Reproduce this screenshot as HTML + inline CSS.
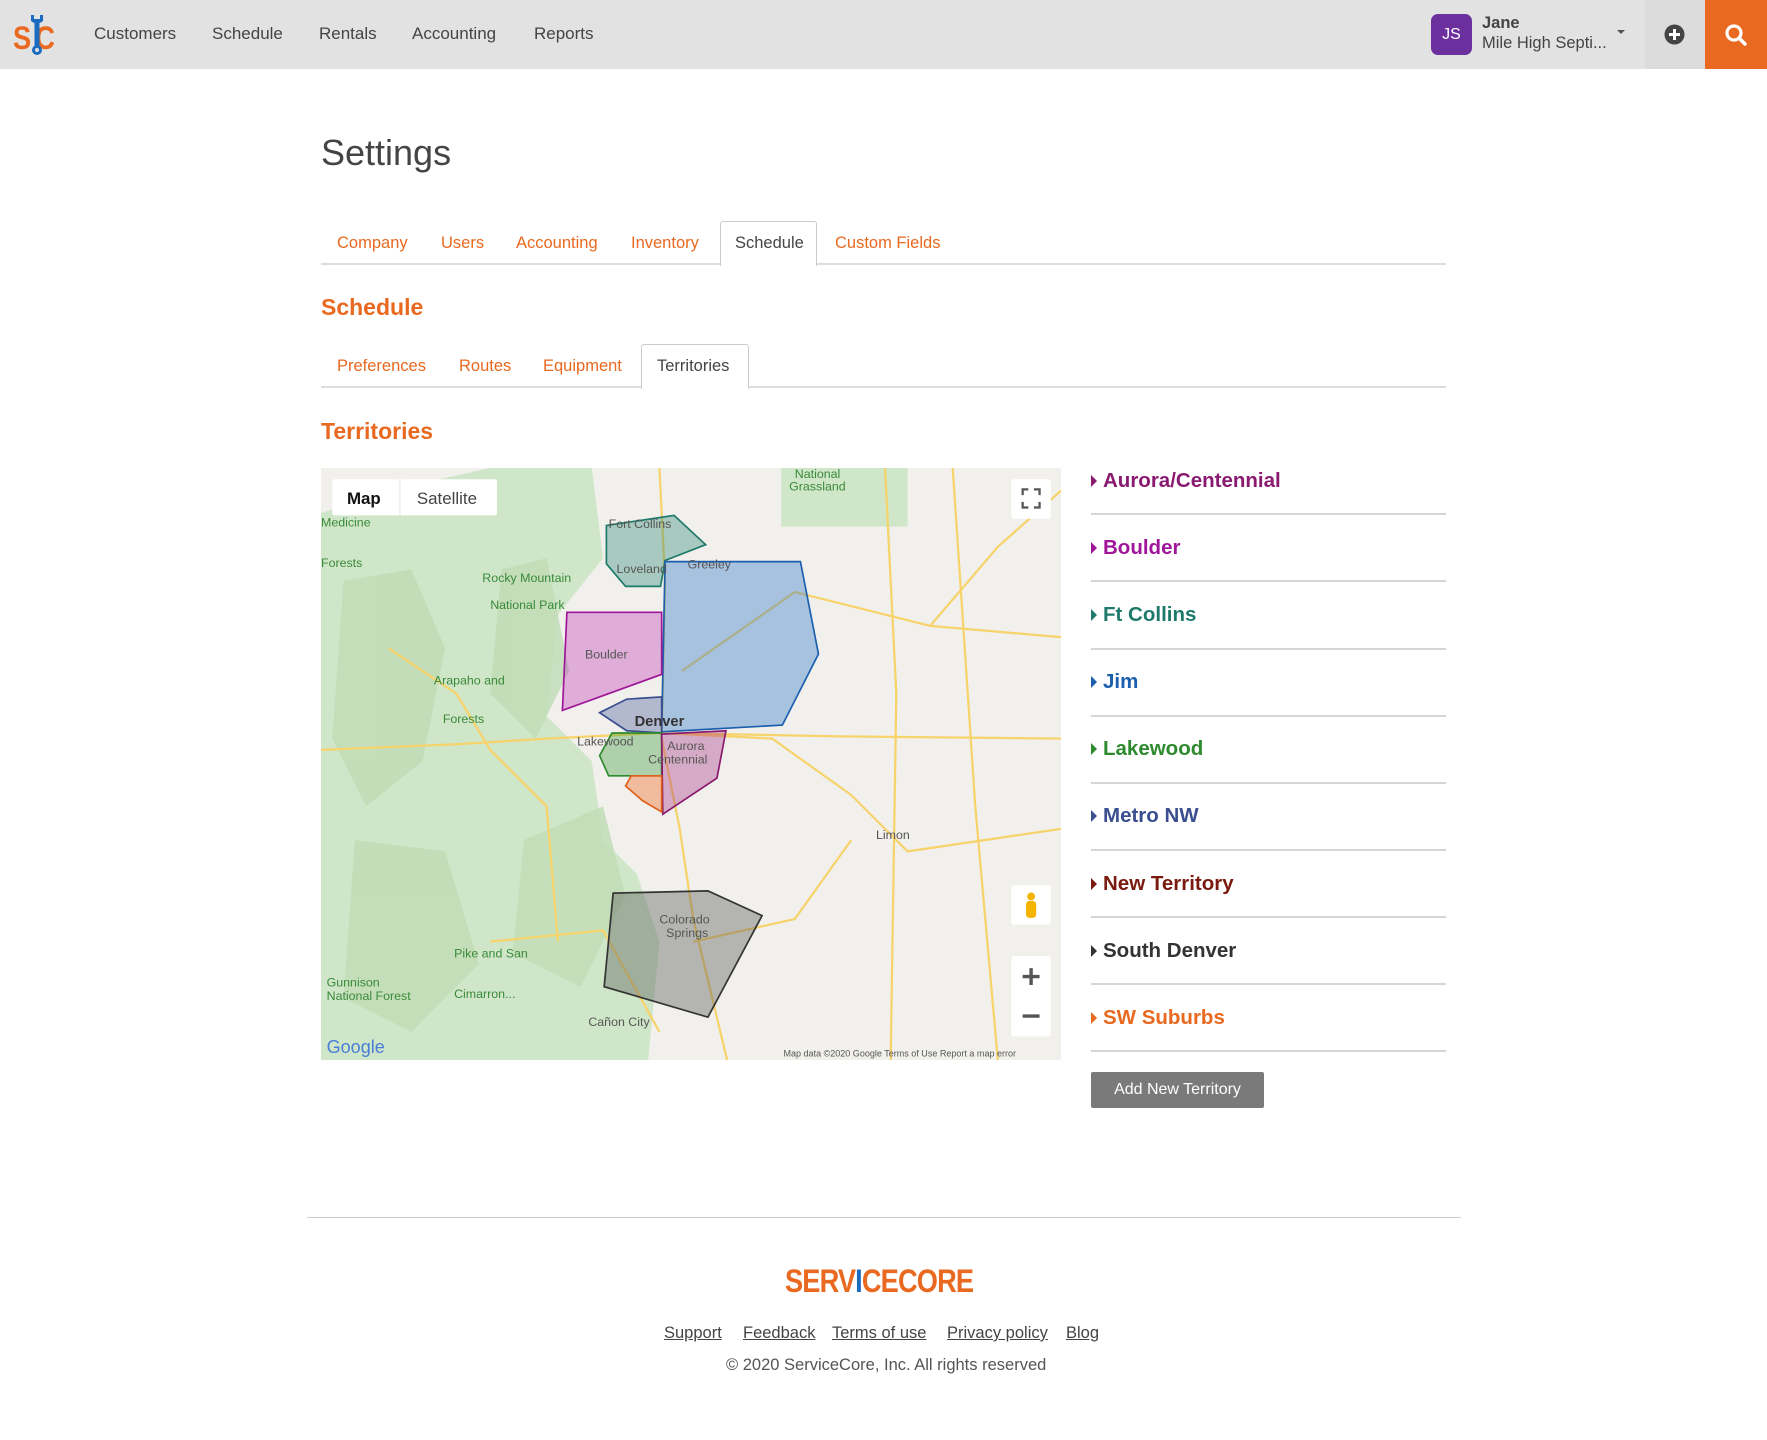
<!DOCTYPE html>
<html><head><meta charset="utf-8"><style>
*{margin:0;padding:0;box-sizing:border-box}
body{width:1767px;height:1440px;background:#fff;font-family:"Liberation Sans",sans-serif;position:relative;overflow:hidden;color:#444}
.a{position:absolute;white-space:nowrap}
.hdr{position:absolute;left:0;top:0;width:1767px;height:69px;background:#e2e2e2}
.nav{font-size:17px;color:#444;top:24px}
.tab{font-size:16.5px;color:#e8691f}
.tabbox{position:absolute;border:1px solid #ccc;border-bottom:none;background:#fff;border-radius:3px 3px 0 0}
.line{position:absolute;height:2px;background:#ddd}
.item{font-size:20.5px;font-weight:bold;left:1103px}
.tri{position:absolute;left:1091px;width:0;height:0;border-top:6px solid transparent;border-bottom:6px solid transparent;border-left:6px solid}
.sep{position:absolute;left:1091px;width:355px;height:2px;background:#d6d6d6}
.ft{font-size:16.5px;color:#444;text-decoration:underline;top:1324px}
</style></head><body>
<div class="hdr"></div>
<!-- logo -->
<div class="a" style="left:13px;top:20px;font-size:32px;font-weight:bold;color:#e8691f;letter-spacing:-2px;transform:scaleX(.85);transform-origin:left">S<span style="color:#e2e2e2">I</span>C</div>
<svg class="a" style="left:28px;top:13px" width="18" height="44" viewBox="0 0 18 44"><path d="M3 2 L3 8 Q9 13 15 8 L15 2 L12 2 L12 6 L6 6 L6 2Z" fill="#1b6bbf"/><rect x="6.5" y="9" width="5" height="26" fill="#1b6bbf"/><circle cx="9" cy="37" r="5" fill="#1b6bbf"/><circle cx="9" cy="37" r="2" fill="#e2e2e2"/></svg>
<div class="a nav" style="left:94px">Customers</div>
<div class="a nav" style="left:212px">Schedule</div>
<div class="a nav" style="left:319px">Rentals</div>
<div class="a nav" style="left:412px">Accounting</div>
<div class="a nav" style="left:534px">Reports</div>
<div class="a" style="left:1431px;top:14px;width:41px;height:41px;border-radius:7px;background:#6c2f9e;color:#fff;font-size:16px;text-align:center;line-height:41px">JS</div>
<div class="a" style="left:1482px;top:14px;font-size:16.5px;font-weight:bold;color:#444">Jane</div>
<div class="a" style="left:1482px;top:34px;font-size:16.5px;color:#444">Mile High Septi...</div>
<div class="a" style="left:1617px;top:30px;border-left:4px solid transparent;border-right:4px solid transparent;border-top:4px solid #555"></div>
<div class="a" style="left:1645px;top:0;width:60px;height:69px;background:#dcdcdc"></div>
<svg class="a" style="left:1664px;top:24px" width="21" height="21" viewBox="0 0 21 21"><circle cx="10.5" cy="10.5" r="10" fill="#444"/><path d="M10.5 5v11M5 10.5h11" stroke="#fff" stroke-width="3"/></svg>
<div class="a" style="left:1705px;top:0;width:62px;height:69px;background:#e8691f"></div>
<svg class="a" style="left:1724px;top:23px" width="24" height="24" viewBox="0 0 24 24"><circle cx="10" cy="10" r="7" fill="none" stroke="#fff" stroke-width="3.2"/><path d="M15 15l6 6" stroke="#fff" stroke-width="3.6" stroke-linecap="round"/></svg>

<div class="a" style="left:321px;top:132px;font-size:36px;color:#444">Settings</div>

<div class="tabbox" style="left:720px;top:221px;width:97px;height:45px"></div>
<div class="line" style="left:321px;top:263px;width:399px"></div>
<div class="line" style="left:817px;top:263px;width:629px"></div>
<div class="a tab" style="left:337px;top:234px">Company</div>
<div class="a tab" style="left:441px;top:234px">Users</div>
<div class="a tab" style="left:516px;top:234px">Accounting</div>
<div class="a tab" style="left:631px;top:234px">Inventory</div>
<div class="a tab" style="left:735px;top:234px;color:#444">Schedule</div>
<div class="a tab" style="left:835px;top:234px">Custom Fields</div>

<div class="a" style="left:321px;top:294px;font-size:23px;font-weight:bold;color:#e8691f">Schedule</div>

<div class="tabbox" style="left:641px;top:344px;width:108px;height:45px"></div>
<div class="line" style="left:321px;top:386px;width:320px"></div>
<div class="line" style="left:749px;top:386px;width:697px"></div>
<div class="a tab" style="left:337px;top:357px">Preferences</div>
<div class="a tab" style="left:459px;top:357px">Routes</div>
<div class="a tab" style="left:543px;top:357px">Equipment</div>
<div class="a tab" style="left:657px;top:357px;color:#444">Territories</div>

<div class="a" style="left:321px;top:418px;font-size:23px;font-weight:bold;color:#e8691f">Territories</div>

<!-- map -->
<svg class="a" style="left:321px;top:468px" width="740" height="592" viewBox="0 0 656 525" preserveAspectRatio="none">
<rect width="656" height="525" fill="#f1f0ec"/>
<g fill="#cfe6c8">
<polygon points="0,40 60,20 150,0 240,0 250,80 210,130 200,220 240,260 250,330 280,360 300,420 290,525 0,525"/>
<rect x="408" y="0" width="112" height="52"/>
</g>
<g fill="#bfdcb5" opacity=".8">
<polygon points="20,100 80,90 110,160 90,260 40,300 10,240"/>
<polygon points="160,90 200,80 220,180 190,240 150,200"/>
<polygon points="30,330 110,340 140,440 80,500 20,470"/>
<polygon points="180,330 250,300 270,380 230,460 170,430"/>
</g>
<g fill="none" stroke="#f7d36b" stroke-width="2">
<path d="M300 0 L305 100 L302 240 L318 320 L330 400 L360 525"/>
<path d="M0 250 L120 245 L200 240 L300 235 L460 238 L656 240"/>
<path d="M300 235 L400 240 L470 290 L520 340 L656 320"/>
<path d="M320 180 L420 110 L540 140 L656 150"/>
<path d="M540 140 L600 70 L656 20"/>
<path d="M60 160 L120 200 L150 250 L200 300 L210 420"/>
<path d="M500 0 L510 200 L505 525"/>
<path d="M470 330 L420 400 L330 420"/>
<path d="M150 420 L250 410 L300 500"/>
<path d="M560 0 L580 300 L600 525"/>
</g>
<g stroke-width="1.5">
<polygon points="253,51 313,42 341,68 305,82 301,105 270,105 253,85" fill="rgba(30,130,110,.35)" stroke="#1e7a6a"/>
<polygon points="305,83 425,83 441,165 409,228 302,234" fill="rgba(30,110,200,.35)" stroke="#1b5fae"/>
<polygon points="218,128 302,128 302,183 214,215" fill="rgba(190,50,180,.35)" stroke="#a0169a"/>
<polygon points="247,217 271,205 302,203 302,235 271,233" fill="rgba(60,80,150,.35)" stroke="#3a4e90"/>
<polygon points="258,235 302,235 302,273 255,273 247,255" fill="rgba(50,150,50,.35)" stroke="#2e8a2e"/>
<polygon points="302,236 359,233 351,275 303,307" fill="rgba(160,40,130,.35)" stroke="#8a1a70"/>
<polygon points="275,273 302,273 302,305 285,295 270,282" fill="rgba(240,110,40,.4)" stroke="#e0601a"/>
<polygon points="259,377 343,375 391,397 343,487 251,460" fill="rgba(90,90,90,.4)" stroke="#333"/>
</g>
<g font-family="Liberation Sans" font-size="11" fill="#555">
<text x="234" y="169">Boulder</text><text x="278" y="229" font-weight="bold" font-size="13" fill="#333">Denver</text>
<text x="227" y="246">Lakewood</text><text x="307" y="250">Aurora</text><text x="290" y="262">Centennial</text>
<text x="300" y="404">Colorado</text><text x="306" y="416">Springs</text>
<text x="255" y="53">Fort Collins</text><text x="262" y="93">Loveland</text><text x="325" y="89">Greeley</text>
<text x="420" y="9" fill="#3a8a3a">National</text><text x="415" y="20" fill="#3a8a3a">Grassland</text>
<text x="143" y="101" fill="#3a8a3a">Rocky Mountain</text><text x="150" y="125" fill="#3a8a3a">National Park</text>
<text x="100" y="192" fill="#3a8a3a">Arapaho and</text><text x="108" y="226" fill="#3a8a3a">Forests</text>
<text x="0" y="52" fill="#3a8a3a">Medicine</text><text x="0" y="88" fill="#3a8a3a">Forests</text>
<text x="5" y="460" fill="#3a8a3a">Gunnison</text><text x="5" y="472" fill="#3a8a3a">National Forest</text>
<text x="118" y="434" fill="#3a8a3a">Pike and San</text><text x="118" y="470" fill="#3a8a3a">Cimarron...</text>
<text x="492" y="329">Limon</text><text x="237" y="495">Cañon City</text><text x="410" y="522" font-size="8">Map data ©2020 Google   Terms of Use   Report a map error</text>
<text x="5" y="519" font-size="16" fill="#4a7fd8">Google</text>
</g>
<rect x="10" y="10" width="146" height="32" fill="#fff" rx="2"/>
<line x1="70" y1="10" x2="70" y2="42" stroke="#e6e6e6"/>
<text x="23" y="32" font-family="Liberation Sans" font-size="15" font-weight="bold" fill="#111">Map</text>
<text x="85" y="32" font-family="Liberation Sans" font-size="15" fill="#444">Satellite</text>
<rect x="612" y="10" width="35" height="35" fill="#fff" rx="2"/>
<path d="M622 24v-5h5M632 19h5v5M637 30v5h-5M627 35h-5v-5" stroke="#555" stroke-width="2" fill="none"/>
<rect x="612" y="370" width="35" height="35" fill="#fff" rx="2"/>
<circle cx="629.5" cy="380" r="3.5" fill="#f4b400"/><rect x="625" y="384" width="9" height="15" rx="3" fill="#f4b400"/>
<rect x="612" y="433" width="35" height="71" fill="#fff" rx="2"/>
<path d="M622 451h15M629.5 443.5v15M622 486h15" stroke="#555" stroke-width="3"/>
</svg>

<!-- list -->
<div class="tri" style="top:475px;border-left-color:#8a1a70"></div><div class="a item" style="top:469px;color:#8a1a70">Aurora/Centennial</div>
<div class="sep" style="top:513px"></div>
<div class="tri" style="top:542px;border-left-color:#a0169a"></div><div class="a item" style="top:536px;color:#a0169a">Boulder</div>
<div class="sep" style="top:580px"></div>
<div class="tri" style="top:609px;border-left-color:#1e7a6a"></div><div class="a item" style="top:603px;color:#1e7a6a">Ft Collins</div>
<div class="sep" style="top:648px"></div>
<div class="tri" style="top:676px;border-left-color:#1b5fae"></div><div class="a item" style="top:670px;color:#1b5fae">Jim</div>
<div class="sep" style="top:715px"></div>
<div class="tri" style="top:743px;border-left-color:#2e8a2e"></div><div class="a item" style="top:737px;color:#2e8a2e">Lakewood</div>
<div class="sep" style="top:782px"></div>
<div class="tri" style="top:810px;border-left-color:#3a4e90"></div><div class="a item" style="top:804px;color:#3a4e90">Metro NW</div>
<div class="sep" style="top:849px"></div>
<div class="tri" style="top:878px;border-left-color:#7a1a10"></div><div class="a item" style="top:872px;color:#7a1a10">New Territory</div>
<div class="sep" style="top:916px"></div>
<div class="tri" style="top:945px;border-left-color:#333"></div><div class="a item" style="top:939px;color:#333">South Denver</div>
<div class="sep" style="top:983px"></div>
<div class="tri" style="top:1012px;border-left-color:#e8691f"></div><div class="a item" style="top:1006px;color:#e8691f">SW Suburbs</div>
<div class="sep" style="top:1050px"></div>
<div class="a" style="left:1091px;top:1072px;width:173px;height:36px;background:#7a7a7a;border-radius:2px;color:#fff;font-size:16px;text-align:center;line-height:36px">Add New Territory</div>

<!-- footer -->
<div class="a" style="left:307px;top:1217px;width:1154px;height:1px;background:#ccc"></div>
<div class="a" style="left:785px;top:1263px;font-size:32px;font-weight:bold;color:#e8691f;letter-spacing:-1px;transform:scaleX(.85);transform-origin:left">SERV<span style="color:#1b6bbf">I</span>CECORE</div>
<div class="a ft" style="left:664px">Support</div>
<div class="a ft" style="left:743px">Feedback</div>
<div class="a ft" style="left:832px">Terms of use</div>
<div class="a ft" style="left:947px">Privacy policy</div>
<div class="a ft" style="left:1066px">Blog</div>
<div class="a" style="left:726px;top:1356px;font-size:16.5px;color:#555">© 2020 ServiceCore, Inc. All rights reserved</div>
</body></html>
